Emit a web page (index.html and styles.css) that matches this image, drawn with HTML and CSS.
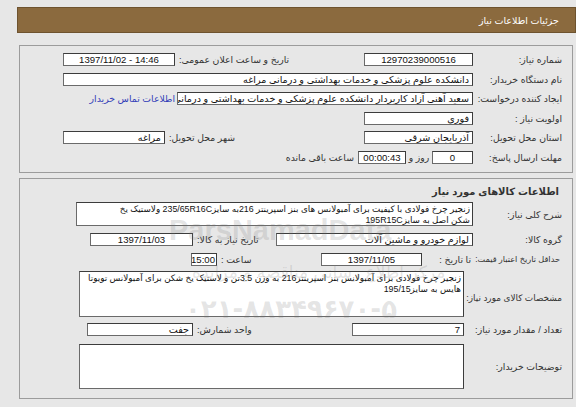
FILE: index.html
```html
<!DOCTYPE html>
<html lang="fa" dir="rtl">
<head>
<meta charset="utf-8">
<title>جزئیات اطلاعات نیاز</title>
<link rel="stylesheet" href="styles.css">
</head>
<body>
<div class="page">
  <div class="hdr">جزئیات اطلاعات نیاز</div>

  <div class="box box1">
    <div class="row">
      <div class="lbl">شماره نیاز:</div>
      <div class="in c w109">12970239000516</div>
      <div class="lg">
        <span class="lgl">تاریخ و ساعت اعلان عمومی:</span>
        <div class="in c ltr w112">1397/11/02 - 14:46</div>
      </div>
    </div>
    <div class="row">
      <div class="lbl">نام دستگاه خریدار:</div>
      <div class="in grow">دانشکده علوم پزشکی و خدمات بهداشتی و درمانی مراغه</div>
    </div>
    <div class="row">
      <div class="lbl">ایجاد کننده درخواست:</div>
      <div class="in w296">سعید آهنی آزاد کاربردار دانشکده علوم پزشکی و خدمات بهداشتی و درمانی مراغه</div>
      <a class="link" href="#">اطلاعات تماس خریدار</a>
    </div>
    <div class="row">
      <div class="lbl">اولویت نیاز :</div>
      <div class="in w109">فوری</div>
    </div>
    <div class="row">
      <div class="lbl">استان محل تحویل:</div>
      <div class="in w109">آذربایجان شرقی</div>
      <div class="lg">
        <span class="lgl">شهر محل تحویل:</span>
        <div class="in w102">مراغه</div>
      </div>
    </div>
    <div class="row">
      <div class="lbl">مهلت ارسال پاسخ:</div>
      <div class="in c w41">0</div>
      <span class="mid">روز و</span>
      <div class="in c w48">00:00:43</div>
      <span class="after">ساعت باقی مانده</span>
    </div>
  </div>

  <div class="box box2">
    <div class="title">اطلاعات کالاهای مورد نیاز</div>
    <div class="trow t1">
      <div class="lbl">شرح کلی نیاز:</div>
      <div class="ta h24 w397">زنجیر چرخ فولادی با کیفیت برای آمبولانس های بنز اسپرینتر 216به سایز235/65R16C ولاستیک یخ<br>شکن اصل به سایز195R15C</div>
    </div>
    <div class="row r20 mt3">
      <div class="lbl">گروه کالا:</div>
      <div class="in w197">لوازم خودرو و ماشین آلات</div>
      <div class="lg ml27">
        <span class="lgl">تاریخ نیاز به کالا:</span>
        <div class="in c w103">1397/11/03</div>
      </div>
    </div>
    <div class="row r20">
      <div class="lbl lbl-sm">حداقل تاریخ اعتبار قیمت:</div>
      <span class="tadate">تا تاریخ :</span>
      <div class="in c w101">1397/11/05</div>
      <div class="lg ml128">
        <span class="lgl">ساعت :</span>
        <div class="in c w26">15:00</div>
      </div>
    </div>
    <div class="trow t2">
      <div class="lbl w100 low lbl-md">مشخصات کالای مورد نیاز:</div>
      <div class="ta h46 w385">زنجیر چرخ فولادی برای آمبولانس بنز اسپرینتر216 به وزن 3.5تن و لاستیک یخ شکن برای آمبولانس تویوتا<br>هایس به سایز195/15</div>
    </div>
    <div class="row mt3">
      <div class="lbl w100">تعداد / مقدار مورد نیاز:</div>
      <div class="in w112">7</div>
      <div class="lg ml24">
        <span class="lgl">واحد شمارش:</span>
        <div class="in w106">جفت</div>
      </div>
    </div>
    <div class="trow t3">
      <div class="lbl w100">توضیحات خریدار:</div>
      <div class="ta h45 w385"></div>
    </div>
  </div>

  <div class="wm wm1" dir="ltr">ParsNamadData</div>
  <div class="wm wm2">مرکز اطلاع رسانی مناقصه و مزایده</div>
  <div class="wm wm3" dir="ltr">۰۲۱-۸۸۳۴۹۶۷۰-۵</div>
</div>
</body>
</html>
```
FILE: styles.css
```css
* { box-sizing: border-box; }
body {
  margin: 0;
  background: #e7e7e7;
  font-family: "Liberation Sans", "DejaVu Sans", sans-serif;
  font-size: 9.3px;
  color: #333;
}
.page {
  position: relative;
  width: 559px;
  margin-left: 8px;
  padding-top: 7px;
  direction: rtl;
}
.hdr {
  height: 26px;
  background: #8b6a3e;
  border: 1px solid #6e532f;
  color: #fff;
  display: flex;
  align-items: center;
  padding-right: 16px;
  font-size: 9.5px;
}
.box {
  width: 554px;
  margin-left: 2px;
  margin-right: 3px;
  border: 1px solid #9c9c9c;
  padding: 4px 9px 5px 43px;
}
.box1 { margin-top: 12px; }
.box2 { margin-top: 5px; padding-top: 3px; padding-bottom: 9px; }
.row {
  display: flex;
  align-items: center;
  height: 19.5px;
}
.r20 { height: 20px; }
.mt3 { margin-top: 3px; }
.lbl {
  width: 90px;
  flex: none;
  white-space: nowrap;
  padding-right: 1px;
}
.lbl.w100 { width: 99px; }
.lbl-sm { font-size: 8.2px; padding-right: 3px; }
.lbl-md { font-size: 8.9px; }
.in {
  height: 13px;
  border: 1px solid #6a6a6a;
  border-top-color: #3c3c3c;
  border-right-color: #3c3c3c;
  background: #fff;
  color: #111;
  line-height: 11px;
  padding: 0 3px;
  white-space: nowrap;
  overflow: hidden;
  flex: none;
  font-size: 9.6px;
}
.c { text-align: center; }
.ltr { direction: ltr; }
.grow { flex: 1; }
.w26 { width: 26px; padding: 0 1px; }
.w41 { width: 41px; }
.w48 { width: 48px; }
.w101 { width: 101px; }
.w102 { width: 102px; }
.w103 { width: 103px; }
.w106 { width: 106px; }
.w109 { width: 109px; }
.w112 { width: 112px; }
.w197 { width: 197px; }
.w296 { width: 296px; }
.lg {
  margin-right: auto;
  display: flex;
  align-items: center;
}
.ml24 { margin-left: 24px; }
.ml27 { margin-left: 27px; }
.ml128 { margin-left: 128px; }
.lgl { margin-left: 4px; white-space: nowrap; }
.link {
  color: #3340b8;
  text-decoration: none;
  margin-right: 2px;
  white-space: nowrap;
}
.mid { width: 26px; text-align: center; white-space: nowrap; }
.after { margin-right: 4px; white-space: nowrap; }
.tadate { width: 51px; white-space: nowrap; padding-right: 2px; }
.title {
  height: 18px;
  display: flex;
  align-items: center;
  padding-right: 4px;
  font-weight: bold;
  font-size: 10px;
  color: #333;
}
.trow { display: flex; align-items: center; }
.t1 { margin-top: 2px; }
.t2 { margin-top: 2px; }
.t3 { margin-top: 4px; }
.low { position: relative; top: 4px; }
.ta {
  flex: none;
  background: #fff;
  border: 1px solid #6a6a6a;
  border-top-color: #3c3c3c;
  border-right-color: #3c3c3c;
  color: #111;
  line-height: 11px;
  padding: 1px 2px;
  white-space: nowrap;
  overflow: hidden;
  font-size: 8.8px;
}
.h24 { height: 24px; }
.h45 { height: 45px; }
.h46 { height: 46px; }
.w397 { width: 397px; }
.w385 { width: 385px; }
.wm {
  position: absolute;
  color: rgba(120, 120, 120, 0.2);
  white-space: nowrap;
  pointer-events: none;
}
.wm1 {
  left: 152px;
  top: 214px;
  font-family: "Liberation Sans", sans-serif;
  font-weight: bold;
  font-size: 29px;
}
.wm2 {
  left: 175px;
  top: 262px;
  font-family: "DejaVu Sans", sans-serif;
  font-size: 17px;
}
.wm3 {
  left: 168px;
  top: 294px;
  font-family: "DejaVu Sans", sans-serif;
  font-size: 26px;
  font-weight: bold;
}
```
